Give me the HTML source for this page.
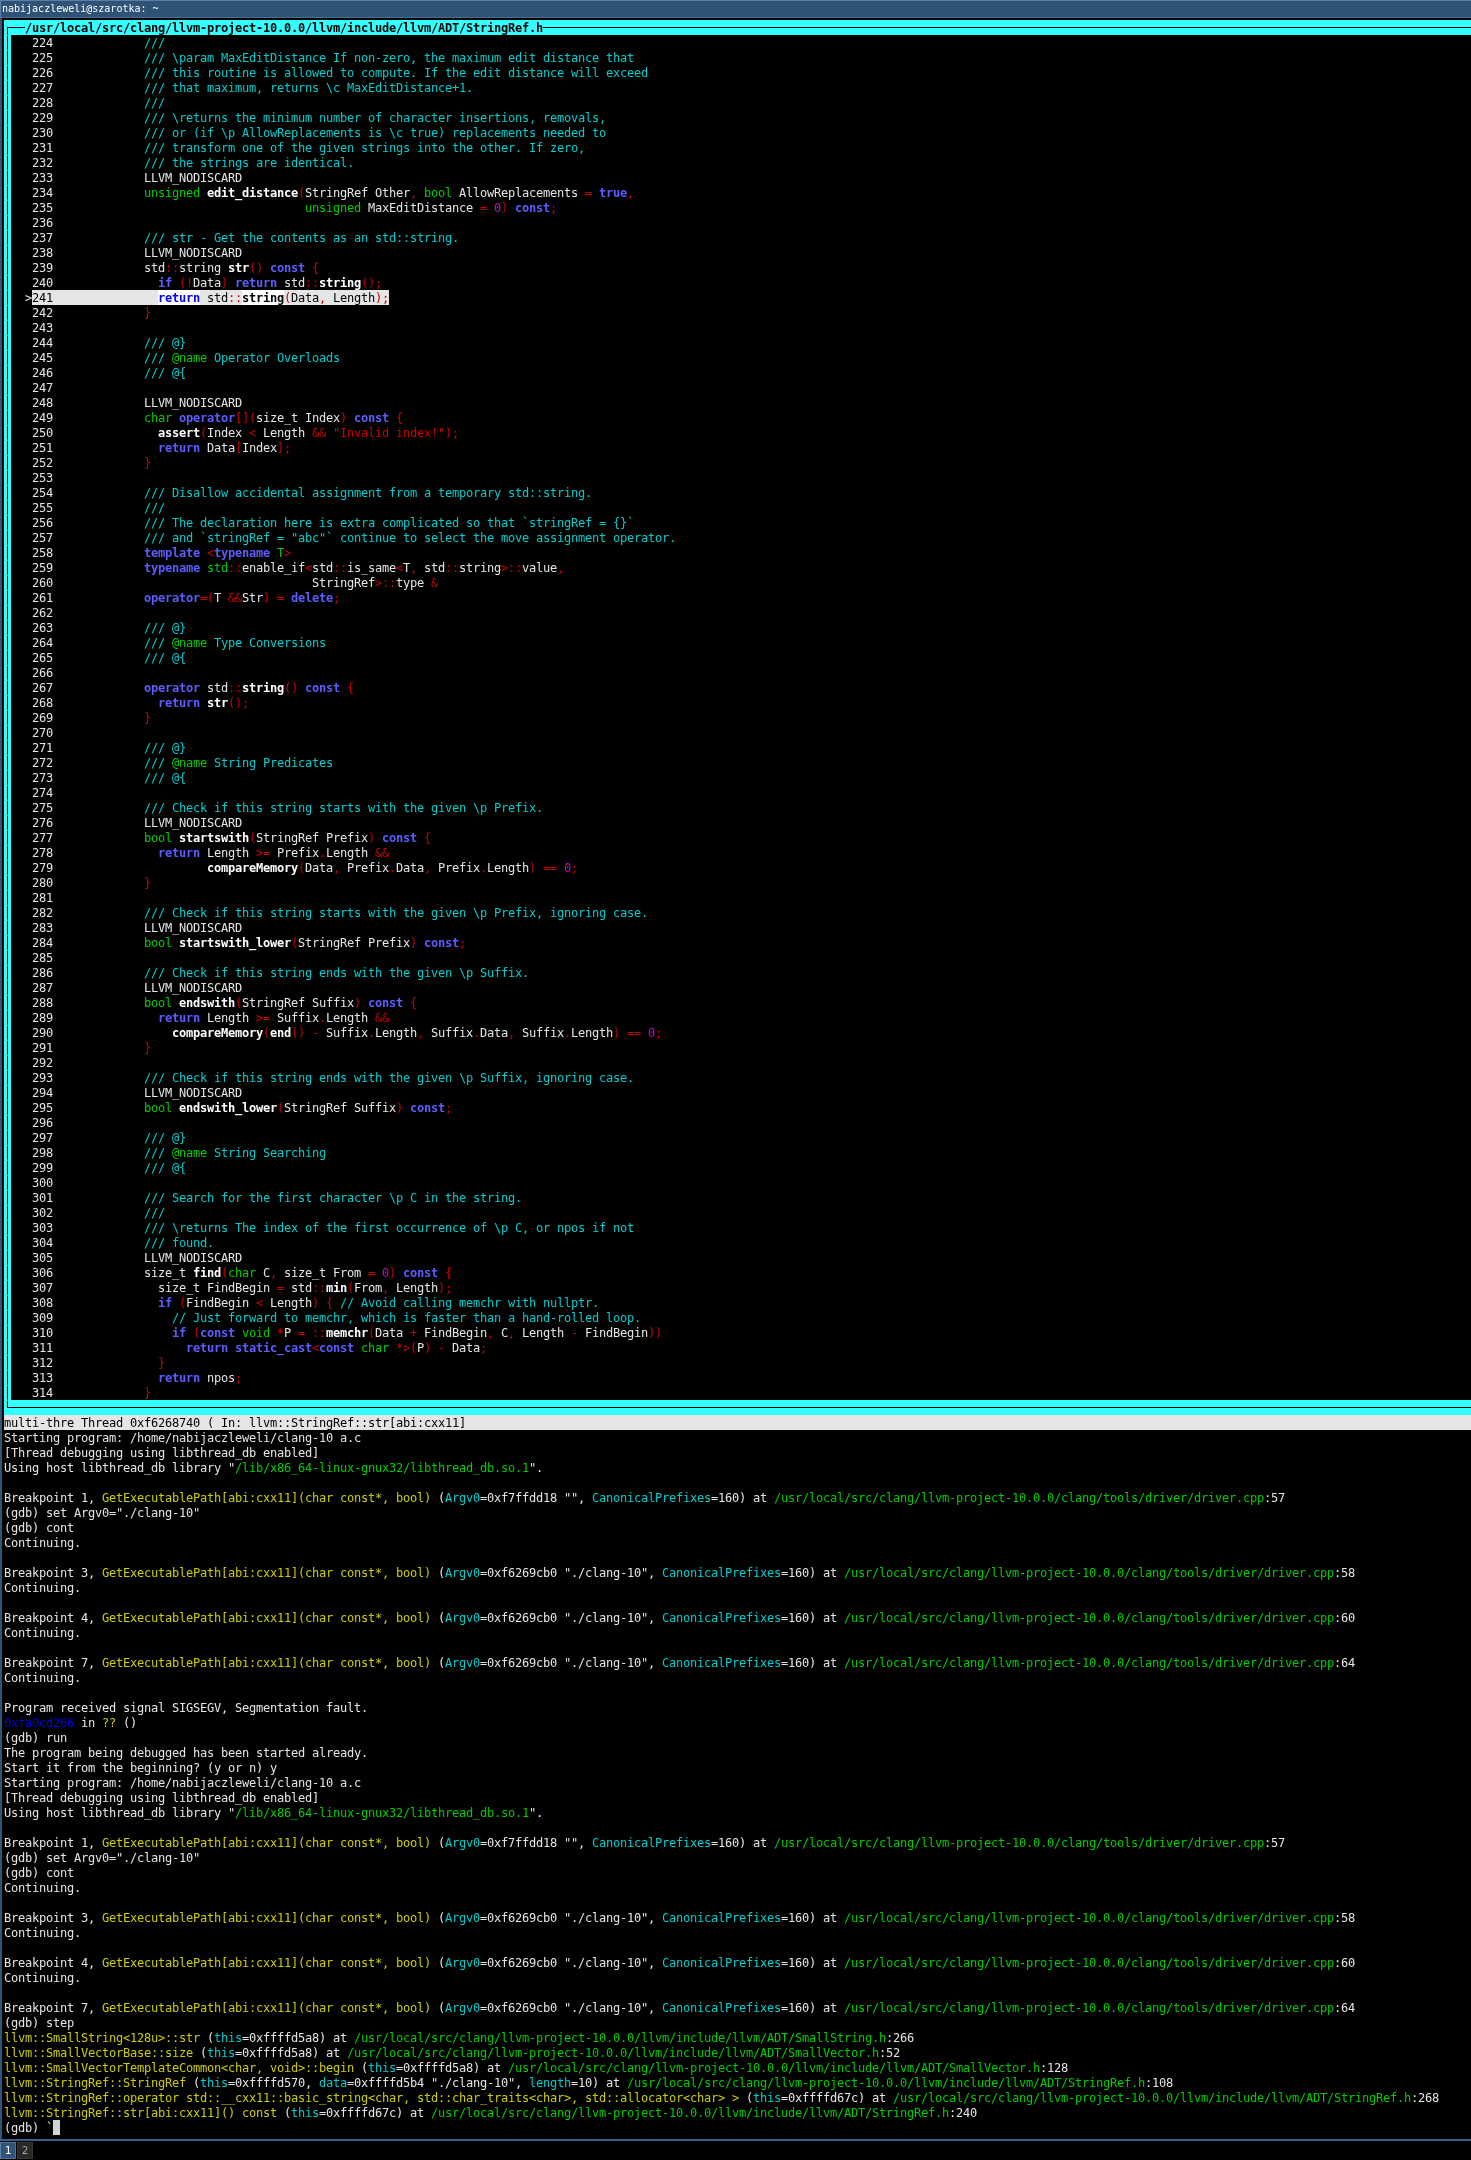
<!DOCTYPE html><html><head><meta charset="utf-8"><title>gdb</title><style>
html,body{margin:0;padding:0;background:#000;}
body{will-change:transform;width:1471px;height:2160px;position:relative;overflow:hidden;font-family:"DejaVu Sans Mono","Liberation Mono",monospace;}
#tb{position:absolute;left:0;top:0;width:1471px;height:18px;background:#2f5377;box-sizing:border-box;border-top:1px solid #5b7fa6;border-left:1px solid #5b7fa6;border-bottom:1px solid #4a6f96;color:#fff;font-size:10px;line-height:15px;white-space:pre;padding-left:1px;}
#lb{position:absolute;left:0;top:18px;width:2px;height:2123px;background:#30547a;}
#bb{position:absolute;left:0;top:2139px;width:1471px;height:2px;background:#385f88;}
#t1{position:absolute;left:0;top:2142px;width:16px;height:17px;box-sizing:border-box;background:#2f5478;border:1px solid #4a74a0;border-left-color:#5a82ab;color:#fff;font-size:11px;line-height:15px;text-align:center;}
#t2{position:absolute;left:17px;top:2142px;width:16px;height:17px;box-sizing:border-box;background:#282828;border:1px solid #363636;color:#a6a6a6;font-size:11px;line-height:15px;text-align:center;}
#cy{position:absolute;left:4px;top:20px;width:1467px;height:1395px;background:#33ffff;}
#sw{position:absolute;left:11px;top:35px;width:1460px;height:1365px;background:#000;}
#vl{position:absolute;left:7px;top:27px;width:1px;height:1381px;background:#000;}
#vg{position:absolute;left:7px;top:34px;width:1px;height:1367px;background:repeating-linear-gradient(#0c4040 0,#0c4040 1px,#1f9999 1px,#1f9999 2px,rgba(0,0,0,0) 2px,rgba(0,0,0,0) 15px);}
#h1{position:absolute;left:7px;top:27px;width:1464px;height:1px;background:#000;}
#h2{position:absolute;left:7px;top:1407px;width:1464px;height:1px;background:#000;}
#st{position:absolute;left:4px;top:1415px;width:1467px;height:15px;background:#e5e5e5;}
.r{position:absolute;left:4px;height:15px;line-height:17px;font-size:12px;letter-spacing:-0.224609375px;white-space:pre;color:#e5e5e5;}
.r span{display:inline-block;height:15px;vertical-align:top;}
.k{color:#5c5cff;font-weight:bold;}
.t,.g{color:#00cd00;}
.f{color:#fff;font-weight:bold;}
.s{color:#cd0000;}
.n{color:#cd00cd;}
.c{color:#00cdcd;}
.y{color:#cdcd00;}
.b{color:#0000ee;}
.hl{background:#e5e5e5;color:#000;}
.hk{background:#fff;color:#0000ee;font-weight:bold;}
.hf{background:#fff;color:#000;font-weight:bold;}
.hs{color:#cd0000;}
.cur{background:#d3d3d3;}
.tt{color:#000;font-weight:bold;background:#33ffff;}
.sl{color:#000;}
</style></head><body>
<div id="tb">nabijaczleweli@szarotka: ~</div>
<div id="lb"></div><div id="bb"></div>
<div id="cy"></div><div id="sw"></div><div id="h1"></div><div id="h2"></div><div id="vl"></div><div id="vg"></div><div id="st"></div>
<div class="r" style="top:20px;left:25px"><span class="tt">/usr/local/src/clang/llvm-project-10.0.0/llvm/include/llvm/ADT/StringRef.h</span></div>
<div class="r sl" style="top:1415px">multi-thre Thread 0xf6268740 ( In: llvm::StringRef::str[abi:cxx11]</div>
<div class="r" style="top:35px">    224         <span class="c">    ///</span></div>
<div class="r" style="top:50px">    225         <span class="c">    /// \param MaxEditDistance If non-zero, the maximum edit distance that</span></div>
<div class="r" style="top:65px">    226         <span class="c">    /// this routine is allowed to compute. If the edit distance will exceed</span></div>
<div class="r" style="top:80px">    227         <span class="c">    /// that maximum, returns \c MaxEditDistance+1.</span></div>
<div class="r" style="top:95px">    228         <span class="c">    ///</span></div>
<div class="r" style="top:110px">    229         <span class="c">    /// \returns the minimum number of character insertions, removals,</span></div>
<div class="r" style="top:125px">    230         <span class="c">    /// or (if \p AllowReplacements is \c true) replacements needed to</span></div>
<div class="r" style="top:140px">    231         <span class="c">    /// transform one of the given strings into the other. If zero,</span></div>
<div class="r" style="top:155px">    232         <span class="c">    /// the strings are identical.</span></div>
<div class="r" style="top:170px">    233             LLVM_NODISCARD</div>
<div class="r" style="top:185px">    234         <span class="t">    unsigned </span><span class="f">edit_distance</span><span class="s">(</span>StringRef Other<span class="s">, </span><span class="t">bool </span>AllowReplacements <span class="s">= </span><span class="k">true</span><span class="s">,</span></div>
<div class="r" style="top:200px">    235         <span class="t">                           unsigned </span>MaxEditDistance <span class="s">= </span><span class="n">0</span><span class="s">) </span><span class="k">const</span><span class="s">;</span></div>
<div class="r" style="top:215px">    236         </div>
<div class="r" style="top:230px">    237         <span class="c">    /// str - Get the contents as an std::string.</span></div>
<div class="r" style="top:245px">    238             LLVM_NODISCARD</div>
<div class="r" style="top:260px">    239             std<span class="s">::</span>string <span class="f">str</span><span class="s">() </span><span class="k">const </span><span class="s">{</span></div>
<div class="r" style="top:275px">    240         <span class="k">      if </span><span class="s">(!</span>Data<span class="s">) </span><span class="k">return </span>std<span class="s">::</span><span class="f">string</span><span class="s">();</span></div>
<div class="r" style="top:290px">   &gt;<span class="hl">241               <span class="hk">return</span> std<span class="hs">::</span><span class="hf">string</span><span class="hs">(</span>Data<span class="hs">,</span> Length<span class="hs">);</span></span></div>
<div class="r" style="top:305px">    242         <span class="s">    }</span></div>
<div class="r" style="top:320px">    243         </div>
<div class="r" style="top:335px">    244         <span class="c">    /// @}</span></div>
<div class="r" style="top:350px">    245         <span class="c">    /// </span><span class="t">@name</span><span class="c"> Operator Overloads</span></div>
<div class="r" style="top:365px">    246         <span class="c">    /// @{</span></div>
<div class="r" style="top:380px">    247         </div>
<div class="r" style="top:395px">    248             LLVM_NODISCARD</div>
<div class="r" style="top:410px">    249         <span class="t">    char </span><span class="k">operator</span><span class="s">[](</span>size_t Index<span class="s">) </span><span class="k">const </span><span class="s">{</span></div>
<div class="r" style="top:425px">    250         <span class="f">      assert</span><span class="s">(</span>Index <span class="s">&lt; </span>Length <span class="s">&amp;&amp; "Invalid index!");</span></div>
<div class="r" style="top:440px">    251         <span class="k">      return </span>Data<span class="s">[</span>Index<span class="s">];</span></div>
<div class="r" style="top:455px">    252         <span class="s">    }</span></div>
<div class="r" style="top:470px">    253         </div>
<div class="r" style="top:485px">    254         <span class="c">    /// Disallow accidental assignment from a temporary std::string.</span></div>
<div class="r" style="top:500px">    255         <span class="c">    ///</span></div>
<div class="r" style="top:515px">    256         <span class="c">    /// The declaration here is extra complicated so that `stringRef = {}`</span></div>
<div class="r" style="top:530px">    257         <span class="c">    /// and `stringRef = "abc"` continue to select the move assignment operator.</span></div>
<div class="r" style="top:545px">    258         <span class="k">    template </span><span class="s">&lt;</span><span class="k">typename </span><span class="t">T</span><span class="s">&gt;</span></div>
<div class="r" style="top:560px">    259         <span class="k">    typename </span><span class="t">std</span><span class="s">::</span>enable_if<span class="s">&lt;</span>std<span class="s">::</span>is_same<span class="s">&lt;</span>T<span class="s">, </span>std<span class="s">::</span>string<span class="s">&gt;::</span>value<span class="s">,</span></div>
<div class="r" style="top:575px">    260                                     StringRef<span class="s">&gt;::</span>type <span class="s">&amp;</span></div>
<div class="r" style="top:590px">    261         <span class="k">    operator</span><span class="s">=(</span>T <span class="s">&amp;&amp;</span>Str<span class="s">) = </span><span class="k">delete</span><span class="s">;</span></div>
<div class="r" style="top:605px">    262         </div>
<div class="r" style="top:620px">    263         <span class="c">    /// @}</span></div>
<div class="r" style="top:635px">    264         <span class="c">    /// </span><span class="t">@name</span><span class="c"> Type Conversions</span></div>
<div class="r" style="top:650px">    265         <span class="c">    /// @{</span></div>
<div class="r" style="top:665px">    266         </div>
<div class="r" style="top:680px">    267         <span class="k">    operator </span>std<span class="s">::</span><span class="f">string</span><span class="s">() </span><span class="k">const </span><span class="s">{</span></div>
<div class="r" style="top:695px">    268         <span class="k">      return </span><span class="f">str</span><span class="s">();</span></div>
<div class="r" style="top:710px">    269         <span class="s">    }</span></div>
<div class="r" style="top:725px">    270         </div>
<div class="r" style="top:740px">    271         <span class="c">    /// @}</span></div>
<div class="r" style="top:755px">    272         <span class="c">    /// </span><span class="t">@name</span><span class="c"> String Predicates</span></div>
<div class="r" style="top:770px">    273         <span class="c">    /// @{</span></div>
<div class="r" style="top:785px">    274         </div>
<div class="r" style="top:800px">    275         <span class="c">    /// Check if this string starts with the given \p Prefix.</span></div>
<div class="r" style="top:815px">    276             LLVM_NODISCARD</div>
<div class="r" style="top:830px">    277         <span class="t">    bool </span><span class="f">startswith</span><span class="s">(</span>StringRef Prefix<span class="s">) </span><span class="k">const </span><span class="s">{</span></div>
<div class="r" style="top:845px">    278         <span class="k">      return </span>Length <span class="s">&gt;= </span>Prefix<span class="s">.</span>Length <span class="s">&amp;&amp;</span></div>
<div class="r" style="top:860px">    279         <span class="f">             compareMemory</span><span class="s">(</span>Data<span class="s">, </span>Prefix<span class="s">.</span>Data<span class="s">, </span>Prefix<span class="s">.</span>Length<span class="s">) == </span><span class="n">0</span><span class="s">;</span></div>
<div class="r" style="top:875px">    280         <span class="s">    }</span></div>
<div class="r" style="top:890px">    281         </div>
<div class="r" style="top:905px">    282         <span class="c">    /// Check if this string starts with the given \p Prefix, ignoring case.</span></div>
<div class="r" style="top:920px">    283             LLVM_NODISCARD</div>
<div class="r" style="top:935px">    284         <span class="t">    bool </span><span class="f">startswith_lower</span><span class="s">(</span>StringRef Prefix<span class="s">) </span><span class="k">const</span><span class="s">;</span></div>
<div class="r" style="top:950px">    285         </div>
<div class="r" style="top:965px">    286         <span class="c">    /// Check if this string ends with the given \p Suffix.</span></div>
<div class="r" style="top:980px">    287             LLVM_NODISCARD</div>
<div class="r" style="top:995px">    288         <span class="t">    bool </span><span class="f">endswith</span><span class="s">(</span>StringRef Suffix<span class="s">) </span><span class="k">const </span><span class="s">{</span></div>
<div class="r" style="top:1010px">    289         <span class="k">      return </span>Length <span class="s">&gt;= </span>Suffix<span class="s">.</span>Length <span class="s">&amp;&amp;</span></div>
<div class="r" style="top:1025px">    290         <span class="f">        compareMemory</span><span class="s">(</span><span class="f">end</span><span class="s">() - </span>Suffix<span class="s">.</span>Length<span class="s">, </span>Suffix<span class="s">.</span>Data<span class="s">, </span>Suffix<span class="s">.</span>Length<span class="s">) == </span><span class="n">0</span><span class="s">;</span></div>
<div class="r" style="top:1040px">    291         <span class="s">    }</span></div>
<div class="r" style="top:1055px">    292         </div>
<div class="r" style="top:1070px">    293         <span class="c">    /// Check if this string ends with the given \p Suffix, ignoring case.</span></div>
<div class="r" style="top:1085px">    294             LLVM_NODISCARD</div>
<div class="r" style="top:1100px">    295         <span class="t">    bool </span><span class="f">endswith_lower</span><span class="s">(</span>StringRef Suffix<span class="s">) </span><span class="k">const</span><span class="s">;</span></div>
<div class="r" style="top:1115px">    296         </div>
<div class="r" style="top:1130px">    297         <span class="c">    /// @}</span></div>
<div class="r" style="top:1145px">    298         <span class="c">    /// </span><span class="t">@name</span><span class="c"> String Searching</span></div>
<div class="r" style="top:1160px">    299         <span class="c">    /// @{</span></div>
<div class="r" style="top:1175px">    300         </div>
<div class="r" style="top:1190px">    301         <span class="c">    /// Search for the first character \p C in the string.</span></div>
<div class="r" style="top:1205px">    302         <span class="c">    ///</span></div>
<div class="r" style="top:1220px">    303         <span class="c">    /// \returns The index of the first occurrence of \p C, or npos if not</span></div>
<div class="r" style="top:1235px">    304         <span class="c">    /// found.</span></div>
<div class="r" style="top:1250px">    305             LLVM_NODISCARD</div>
<div class="r" style="top:1265px">    306             size_t <span class="f">find</span><span class="s">(</span><span class="t">char </span>C<span class="s">, </span>size_t From <span class="s">= </span><span class="n">0</span><span class="s">) </span><span class="k">const </span><span class="s">{</span></div>
<div class="r" style="top:1280px">    307               size_t FindBegin <span class="s">= </span>std<span class="s">::</span><span class="f">min</span><span class="s">(</span>From<span class="s">, </span>Length<span class="s">);</span></div>
<div class="r" style="top:1295px">    308         <span class="k">      if </span><span class="s">(</span>FindBegin <span class="s">&lt; </span>Length<span class="s">) { </span><span class="c">// Avoid calling memchr with nullptr.</span></div>
<div class="r" style="top:1310px">    309         <span class="c">        // Just forward to memchr, which is faster than a hand-rolled loop.</span></div>
<div class="r" style="top:1325px">    310         <span class="k">        if </span><span class="s">(</span><span class="k">const </span><span class="t">void </span><span class="s">*</span>P <span class="s">= ::</span><span class="f">memchr</span><span class="s">(</span>Data <span class="s">+ </span>FindBegin<span class="s">, </span>C<span class="s">, </span>Length <span class="s">- </span>FindBegin<span class="s">))</span></div>
<div class="r" style="top:1340px">    311         <span class="k">          return static_cast</span><span class="s">&lt;</span><span class="k">const </span><span class="t">char </span><span class="s">*&gt;(</span>P<span class="s">) - </span>Data<span class="s">;</span></div>
<div class="r" style="top:1355px">    312         <span class="s">      }</span></div>
<div class="r" style="top:1370px">    313         <span class="k">      return </span>npos<span class="s">;</span></div>
<div class="r" style="top:1385px">    314         <span class="s">    }</span></div>
<div class="r" style="top:1430px">Starting program: /home/nabijaczleweli/clang-10 a.c</div>
<div class="r" style="top:1445px">[Thread debugging using libthread_db enabled]</div>
<div class="r" style="top:1460px">Using host libthread_db library "<span class="g">/lib/x86_64-linux-gnux32/libthread_db.so.1</span>".</div>
<div class="r" style="top:1490px">Breakpoint 1, <span class="y">GetExecutablePath[abi:cxx11](char const*, bool)</span> (<span class="c">Argv0</span>=0xf7ffdd18 "", <span class="c">CanonicalPrefixes</span>=160) at <span class="g">/usr/local/src/clang/llvm-project-10.0.0/clang/tools/driver/driver.cpp</span>:57</div>
<div class="r" style="top:1505px">(gdb) set Argv0="./clang-10"</div>
<div class="r" style="top:1520px">(gdb) cont</div>
<div class="r" style="top:1535px">Continuing.</div>
<div class="r" style="top:1565px">Breakpoint 3, <span class="y">GetExecutablePath[abi:cxx11](char const*, bool)</span> (<span class="c">Argv0</span>=0xf6269cb0 "./clang-10", <span class="c">CanonicalPrefixes</span>=160) at <span class="g">/usr/local/src/clang/llvm-project-10.0.0/clang/tools/driver/driver.cpp</span>:58</div>
<div class="r" style="top:1580px">Continuing.</div>
<div class="r" style="top:1610px">Breakpoint 4, <span class="y">GetExecutablePath[abi:cxx11](char const*, bool)</span> (<span class="c">Argv0</span>=0xf6269cb0 "./clang-10", <span class="c">CanonicalPrefixes</span>=160) at <span class="g">/usr/local/src/clang/llvm-project-10.0.0/clang/tools/driver/driver.cpp</span>:60</div>
<div class="r" style="top:1625px">Continuing.</div>
<div class="r" style="top:1655px">Breakpoint 7, <span class="y">GetExecutablePath[abi:cxx11](char const*, bool)</span> (<span class="c">Argv0</span>=0xf6269cb0 "./clang-10", <span class="c">CanonicalPrefixes</span>=160) at <span class="g">/usr/local/src/clang/llvm-project-10.0.0/clang/tools/driver/driver.cpp</span>:64</div>
<div class="r" style="top:1670px">Continuing.</div>
<div class="r" style="top:1700px">Program received signal SIGSEGV, Segmentation fault.</div>
<div class="r" style="top:1715px"><span class="b">0xfa0cd266</span> in <span class="y">??</span> ()</div>
<div class="r" style="top:1730px">(gdb) run</div>
<div class="r" style="top:1745px">The program being debugged has been started already.</div>
<div class="r" style="top:1760px">Start it from the beginning? (y or n) y</div>
<div class="r" style="top:1775px">Starting program: /home/nabijaczleweli/clang-10 a.c</div>
<div class="r" style="top:1790px">[Thread debugging using libthread_db enabled]</div>
<div class="r" style="top:1805px">Using host libthread_db library "<span class="g">/lib/x86_64-linux-gnux32/libthread_db.so.1</span>".</div>
<div class="r" style="top:1835px">Breakpoint 1, <span class="y">GetExecutablePath[abi:cxx11](char const*, bool)</span> (<span class="c">Argv0</span>=0xf7ffdd18 "", <span class="c">CanonicalPrefixes</span>=160) at <span class="g">/usr/local/src/clang/llvm-project-10.0.0/clang/tools/driver/driver.cpp</span>:57</div>
<div class="r" style="top:1850px">(gdb) set Argv0="./clang-10"</div>
<div class="r" style="top:1865px">(gdb) cont</div>
<div class="r" style="top:1880px">Continuing.</div>
<div class="r" style="top:1910px">Breakpoint 3, <span class="y">GetExecutablePath[abi:cxx11](char const*, bool)</span> (<span class="c">Argv0</span>=0xf6269cb0 "./clang-10", <span class="c">CanonicalPrefixes</span>=160) at <span class="g">/usr/local/src/clang/llvm-project-10.0.0/clang/tools/driver/driver.cpp</span>:58</div>
<div class="r" style="top:1925px">Continuing.</div>
<div class="r" style="top:1955px">Breakpoint 4, <span class="y">GetExecutablePath[abi:cxx11](char const*, bool)</span> (<span class="c">Argv0</span>=0xf6269cb0 "./clang-10", <span class="c">CanonicalPrefixes</span>=160) at <span class="g">/usr/local/src/clang/llvm-project-10.0.0/clang/tools/driver/driver.cpp</span>:60</div>
<div class="r" style="top:1970px">Continuing.</div>
<div class="r" style="top:2000px">Breakpoint 7, <span class="y">GetExecutablePath[abi:cxx11](char const*, bool)</span> (<span class="c">Argv0</span>=0xf6269cb0 "./clang-10", <span class="c">CanonicalPrefixes</span>=160) at <span class="g">/usr/local/src/clang/llvm-project-10.0.0/clang/tools/driver/driver.cpp</span>:64</div>
<div class="r" style="top:2015px">(gdb) step</div>
<div class="r" style="top:2030px"><span class="y">llvm::SmallString&lt;128u&gt;::str</span> (<span class="c">this</span>=0xffffd5a8) at <span class="g">/usr/local/src/clang/llvm-project-10.0.0/llvm/include/llvm/ADT/SmallString.h</span>:266</div>
<div class="r" style="top:2045px"><span class="y">llvm::SmallVectorBase::size</span> (<span class="c">this</span>=0xffffd5a8) at <span class="g">/usr/local/src/clang/llvm-project-10.0.0/llvm/include/llvm/ADT/SmallVector.h</span>:52</div>
<div class="r" style="top:2060px"><span class="y">llvm::SmallVectorTemplateCommon&lt;char, void&gt;::begin</span> (<span class="c">this</span>=0xffffd5a8) at <span class="g">/usr/local/src/clang/llvm-project-10.0.0/llvm/include/llvm/ADT/SmallVector.h</span>:128</div>
<div class="r" style="top:2075px"><span class="y">llvm::StringRef::StringRef</span> (<span class="c">this</span>=0xffffd570, <span class="c">data</span>=0xffffd5b4 "./clang-10", <span class="c">length</span>=10) at <span class="g">/usr/local/src/clang/llvm-project-10.0.0/llvm/include/llvm/ADT/StringRef.h</span>:108</div>
<div class="r" style="top:2090px"><span class="y">llvm::StringRef::operator std::__cxx11::basic_string&lt;char, std::char_traits&lt;char&gt;, std::allocator&lt;char&gt; &gt;</span> (<span class="c">this</span>=0xffffd67c) at <span class="g">/usr/local/src/clang/llvm-project-10.0.0/llvm/include/llvm/ADT/StringRef.h</span>:268</div>
<div class="r" style="top:2105px"><span class="y">llvm::StringRef::str[abi:cxx11]() const</span> (<span class="c">this</span>=0xffffd67c) at <span class="g">/usr/local/src/clang/llvm-project-10.0.0/llvm/include/llvm/ADT/StringRef.h</span>:240</div>
<div class="r" style="top:2120px">(gdb) `<span class="cur"> </span></div>
<div id="t1">1</div><div id="t2">2</div>
</body></html>
